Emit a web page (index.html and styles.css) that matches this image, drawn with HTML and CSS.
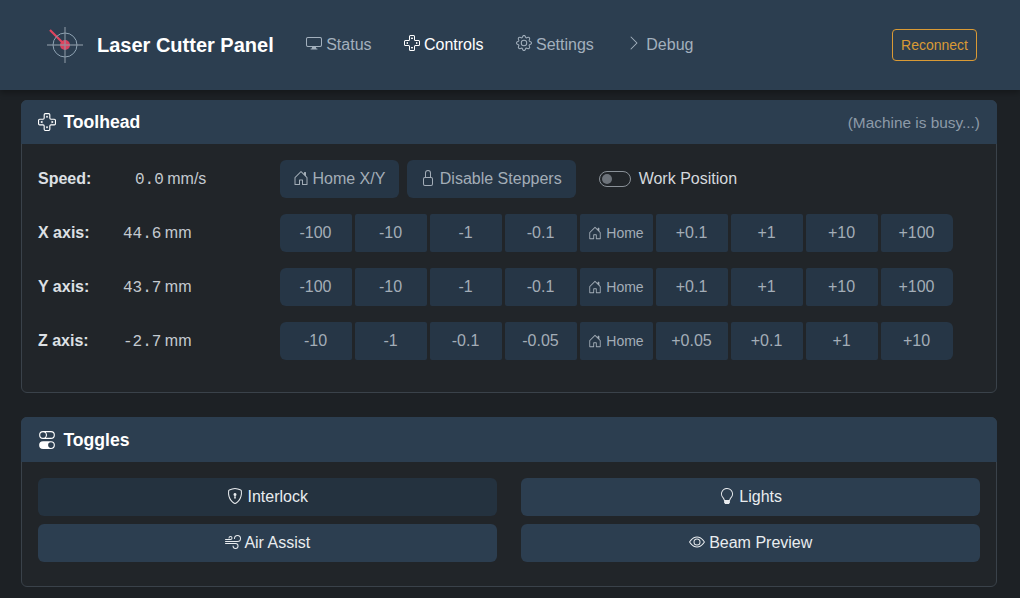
FILE: index.html
```html
<!DOCTYPE html>
<html lang="en">
<head>
  <meta charset="UTF-8">
  <title>Laser Cutter Panel</title>
  <link rel="stylesheet" href="styles.css">
</head>
<body>
  <svg class="defs" width="0" height="0">
    <symbol id="i-display" viewBox="0 0 16 16"><path d="M0 4s0-2 2-2h12s2 0 2 2v6s0 2-2 2h-4q0 1 .25 1.5H11a.5.5 0 0 1 0 1H5a.5.5 0 0 1 0-1h.75Q6 13 6 12H2s-2 0-2-2zm1.398-.855a.76.76 0 0 0-.254.302A1.5 1.5 0 0 0 1 4.01V10c0 .325.078.502.145.602q.105.156.302.254a1.5 1.5 0 0 0 .538.143L2.01 11H14c.325 0 .502-.078.602-.145a.76.76 0 0 0 .254-.302 1.5 1.5 0 0 0 .143-.538L15 9.99V4c0-.325-.078-.502-.145-.602a.76.76 0 0 0-.302-.254A1.5 1.5 0 0 0 13.99 3H2c-.325 0-.502.078-.602.145"/></symbol>
    <symbol id="i-dpad" viewBox="0 0 16 16"><path d="m7.788 2.34-.799 1.278A.25.25 0 0 0 7.201 4h1.598a.25.25 0 0 0 .212-.382l-.799-1.279a.25.25 0 0 0-.424 0Zm0 11.32-.799-1.277A.25.25 0 0 1 7.201 12h1.598a.25.25 0 0 1 .212.383l-.799 1.278a.25.25 0 0 1-.424 0ZM3.617 9.01 2.34 8.213a.25.25 0 0 1 0-.424l1.278-.799A.25.25 0 0 1 4 7.201V8.8a.25.25 0 0 1-.383.212Zm10.043-.798-1.277.799A.25.25 0 0 1 12 8.799V7.2a.25.25 0 0 1 .383-.212l1.278.799a.25.25 0 0 1 0 .424Z"/><path d="M6.5 0A1.5 1.5 0 0 0 5 1.5v3a.5.5 0 0 1-.5.5h-3A1.5 1.5 0 0 0 0 6.5v3A1.5 1.5 0 0 0 1.5 11h3a.5.5 0 0 1 .5.5v3A1.5 1.5 0 0 0 6.5 16h3a1.5 1.5 0 0 0 1.5-1.5v-3a.5.5 0 0 1 .5-.5h3A1.5 1.5 0 0 0 16 9.5v-3A1.5 1.5 0 0 0 14.5 5h-3a.5.5 0 0 1-.5-.5v-3A1.5 1.5 0 0 0 9.5 0zM6 1.5a.5.5 0 0 1 .5-.5h3a.5.5 0 0 1 .5.5v3A1.5 1.5 0 0 0 11.5 6h3a.5.5 0 0 1 .5.5v3a.5.5 0 0 1-.5.5h-3a1.5 1.5 0 0 0-1.5 1.5v3a.5.5 0 0 1-.5.5h-3a.5.5 0 0 1-.5-.5v-3A1.5 1.5 0 0 0 4.5 10h-3a.5.5 0 0 1-.5-.5v-3a.5.5 0 0 1 .5-.5h3A1.5 1.5 0 0 0 6 4.5z"/></symbol>
    <symbol id="i-gear" viewBox="0 0 16 16"><path d="M8 4.754a3.246 3.246 0 1 0 0 6.492 3.246 3.246 0 0 0 0-6.492M5.754 8a2.246 2.246 0 1 1 4.492 0 2.246 2.246 0 0 1-4.492 0"/><path d="M9.796 1.343c-.527-1.79-3.065-1.79-3.592 0l-.094.319a.873.873 0 0 1-1.255.52l-.292-.16c-1.64-.892-3.433.902-2.54 2.541l.159.292a.873.873 0 0 1-.52 1.255l-.319.094c-1.79.527-1.79 3.065 0 3.592l.319.094a.873.873 0 0 1 .52 1.255l-.16.292c-.892 1.64.901 3.434 2.541 2.54l.292-.159a.873.873 0 0 1 1.255.52l.094.319c.527 1.79 3.065 1.79 3.592 0l.094-.319a.873.873 0 0 1 1.255-.52l.292.16c1.64.893 3.434-.902 2.54-2.541l-.159-.292a.873.873 0 0 1 .52-1.255l.319-.094c1.79-.527 1.79-3.065 0-3.592l-.319-.094a.873.873 0 0 1-.52-1.255l.16-.292c.893-1.64-.902-3.433-2.541-2.54l-.292.159a.873.873 0 0 1-1.255-.52zm-2.633.283c.246-.835 1.428-.835 1.674 0l.094.319a1.873 1.873 0 0 0 2.693 1.115l.291-.16c.764-.415 1.6.42 1.184 1.185l-.159.292a1.873 1.873 0 0 0 1.116 2.692l.318.094c.835.246.835 1.428 0 1.674l-.319.094a1.873 1.873 0 0 0-1.115 2.693l.16.291c.415.764-.42 1.6-1.185 1.184l-.291-.159a1.873 1.873 0 0 0-2.693 1.116l-.094.318c-.246.835-1.428.835-1.674 0l-.094-.319a1.873 1.873 0 0 0-2.692-1.115l-.292.16c-.764.415-1.6-.42-1.184-1.185l.159-.291A1.873 1.873 0 0 0 1.945 8.93l-.319-.094c-.835-.246-.835-1.428 0-1.674l.319-.094A1.873 1.873 0 0 0 3.06 4.377l-.16-.292c-.415-.764.42-1.6 1.185-1.184l.292.159a1.873 1.873 0 0 0 2.692-1.115z"/></symbol>
    <symbol id="i-chevron" viewBox="0 0 16 16"><path d="M4.646 1.646a.5.5 0 0 1 .708 0l6 6a.5.5 0 0 1 0 .708l-6 6a.5.5 0 0 1-.708-.708L10.293 8 4.646 2.354a.5.5 0 0 1 0-.708"/></symbol>
    <symbol id="i-house" viewBox="0 0 16 16"><path d="M8.354 1.146a.5.5 0 0 0-.708 0l-6 6A.5.5 0 0 0 1.5 7.5v7a.5.5 0 0 0 .5.5h4.5a.5.5 0 0 0 .5-.5v-4h2v4a.5.5 0 0 0 .5.5H14a.5.5 0 0 0 .5-.5v-7a.5.5 0 0 0-.146-.354L13 5.793V2.5a.5.5 0 0 0-.5-.5h-1a.5.5 0 0 0-.5.5v1.293zM2.5 14V7.707l5.5-5.5 5.5 5.5V14H10v-4a.5.5 0 0 0-.5-.5h-3a.5.5 0 0 0-.5.5v4z"/></symbol>
    <symbol id="i-lock" viewBox="0 0 16 16"><path d="M8 1a2 2 0 0 1 2 2v4H6V3a2 2 0 0 1 2-2m3 6V3a3 3 0 0 0-6 0v4a2 2 0 0 0-2 2v5a2 2 0 0 0 2 2h6a2 2 0 0 0 2-2V9a2 2 0 0 0-2-2M5 8h6a1 1 0 0 1 1 1v5a1 1 0 0 1-1 1H5a1 1 0 0 1-1-1V9a1 1 0 0 1 1-1"/></symbol>
    <symbol id="i-toggles" viewBox="0 0 16 16"><path d="M4.5 9a3.5 3.5 0 1 0 0 7h7a3.5 3.5 0 1 0 0-7zm7 6a2.5 2.5 0 1 1 0-5 2.5 2.5 0 0 1 0 5m-7-14a2.5 2.5 0 1 0 0 5 2.5 2.5 0 0 0 0-5m2.45 0A3.5 3.5 0 0 1 8 3.5 3.5 3.5 0 0 1 6.95 6h4.55a2.5 2.5 0 0 0 0-5zM4.5 0h7a3.5 3.5 0 1 1 0 7h-7a3.5 3.5 0 1 1 0-7"/></symbol>
    <symbol id="i-shield" viewBox="0 0 16 16"><path d="M5.338 1.59a61 61 0 0 0-2.837.856.48.48 0 0 0-.328.39c-.554 4.157.726 7.19 2.253 9.188a10.7 10.7 0 0 0 2.287 2.233c.346.244.652.42.893.533q.18.085.293.118a1 1 0 0 0 .101.025 1 1 0 0 0 .1-.025q.114-.034.294-.118c.24-.113.547-.29.893-.533a10.7 10.7 0 0 0 2.287-2.233c1.527-1.997 2.807-5.031 2.253-9.188a.48.48 0 0 0-.328-.39c-.651-.213-1.75-.56-2.837-.855C9.552 1.29 8.531 1.067 8 1.067c-.53 0-1.552.223-2.662.524zM5.072.56C6.157.265 7.31 0 8 0s1.843.265 2.928.56c1.11.3 2.229.655 2.887.87a1.54 1.54 0 0 1 1.044 1.262c.596 4.477-.787 7.795-2.465 9.99a11.8 11.8 0 0 1-2.517 2.453 7 7 0 0 1-1.048.625c-.28.132-.581.24-.829.24s-.548-.108-.829-.24a7 7 0 0 1-1.048-.625 11.8 11.8 0 0 1-2.517-2.453C1.928 10.487.545 7.169 1.141 2.692A1.54 1.54 0 0 1 2.185 1.43 63 63 0 0 1 5.072.56"/><path d="M9.5 6.5a1.5 1.5 0 0 1-1 1.415l.385 1.99a.5.5 0 0 1-.491.595h-.788a.5.5 0 0 1-.49-.595l.384-1.99a1.5 1.5 0 1 1 2-1.415"/></symbol>
    <symbol id="i-wind" viewBox="0 0 16 16"><path d="M12.5 2A2.5 2.5 0 0 0 10 4.5a.5.5 0 0 1-1 0A3.5 3.5 0 1 1 12.5 8H.5a.5.5 0 0 1 0-1h12a2.5 2.5 0 0 0 0-5m-7 1a1 1 0 0 0-1 1 .5.5 0 0 1-1 0 2 2 0 1 1 2 2h-5a.5.5 0 0 1 0-1h5a1 1 0 0 0 0-2M0 9.5A.5.5 0 0 1 .5 9h10.042a3 3 0 1 1-3 3 .5.5 0 0 1 1 0 2 2 0 1 0 2-2H.5a.5.5 0 0 1-.5-.5"/></symbol>
    <symbol id="i-bulb" viewBox="0 0 16 16"><path d="M2 6a6 6 0 1 1 10.174 4.31c-.203.196-.359.4-.453.619l-.762 1.769A.5.5 0 0 1 10.5 13a.5.5 0 0 1 0 1 .5.5 0 0 1 0 1l-.224.447a1 1 0 0 1-.894.553H6.618a1 1 0 0 1-.894-.553L5.5 15a.5.5 0 0 1 0-1 .5.5 0 0 1 0-1 .5.5 0 0 1-.46-.302l-.761-1.77a2 2 0 0 0-.453-.618A5.98 5.98 0 0 1 2 6m6-5a5 5 0 0 0-3.479 8.592c.263.254.514.564.676.941L5.83 12h4.342l.632-1.467c.162-.377.413-.687.676-.941A5 5 0 0 0 8 1"/></symbol>
    <symbol id="i-eye" viewBox="0 0 16 16"><path d="M16 8s-3-5.5-8-5.5S0 8 0 8s3 5.5 8 5.5S16 8 16 8M1.173 8a13 13 0 0 1 1.66-2.043C4.12 4.668 5.88 3.5 8 3.5s3.879 1.168 5.168 2.457A13 13 0 0 1 14.828 8q-.086.13-.195.288c-.335.48-.83 1.12-1.465 1.755C11.879 11.332 10.119 12.5 8 12.5s-3.879-1.168-5.168-2.457A13 13 0 0 1 1.172 8z"/><path d="M8 5.5a2.5 2.5 0 1 0 0 5 2.5 2.5 0 0 0 0-5M4.5 8a3.5 3.5 0 1 1 7 0 3.5 3.5 0 0 1-7 0"/></symbol>
  </svg>

  <nav class="navbar">
    <a class="brand">
      <svg class="logo" width="36" height="36" viewBox="0 0 36 36">
        <circle cx="18" cy="18" r="5" fill="#d9415f"/>
        <path d="M3 3L18 18" stroke="#e0455f" stroke-width="2.2"/>
        <circle cx="18" cy="18" r="12" fill="none" stroke="#8fa3b3" stroke-width="1"/>
        <path d="M0 18H36M18 0V36" stroke="#8d9aa6" stroke-width="1.4" opacity=".75"/>
      </svg>
      <span>Laser Cutter Panel</span>
    </a>
    <ul class="nav-links">
      <li><a><svg class="icon"><use href="#i-display"/></svg> Status</a></li>
      <li><a class="active"><svg class="icon"><use href="#i-dpad"/></svg> Controls</a></li>
      <li><a><svg class="icon"><use href="#i-gear"/></svg> Settings</a></li>
      <li><a><svg class="icon"><use href="#i-chevron"/></svg> Debug</a></li>
    </ul>
    <button class="btn-reconnect">Reconnect</button>
  </nav>

  <main class="content">
    <section class="card">
      <header class="card-header">
        <h2><svg class="icon"><use href="#i-dpad"/></svg> Toolhead</h2>
        <span class="busy">(Machine is busy...)</span>
      </header>
      <div class="card-body toolhead">
        <div class="row">
          <div class="axis"><b>Speed:</b><span class="val speed"><code>0.0</code> mm/s</span></div>
          <div class="tools">
            <button class="btn tool"><svg class="icon"><use href="#i-house"/></svg> Home X/Y</button>
            <button class="btn tool"><svg class="icon"><use href="#i-lock"/></svg> Disable Steppers</button>
            <label class="switch"><span class="track"></span>Work Position</label>
          </div>
        </div>
        <div class="row">
          <div class="axis"><b>X axis:</b><span class="val"><code>44.6</code> mm</span></div>
          <div class="steps">
            <button class="btn">-100</button><button class="btn">-10</button><button class="btn">-1</button><button class="btn">-0.1</button>
            <button class="btn home"><svg class="icon"><use href="#i-house"/></svg> Home</button>
            <button class="btn">+0.1</button><button class="btn">+1</button><button class="btn">+10</button><button class="btn">+100</button>
          </div>
        </div>
        <div class="row">
          <div class="axis"><b>Y axis:</b><span class="val"><code>43.7</code> mm</span></div>
          <div class="steps">
            <button class="btn">-100</button><button class="btn">-10</button><button class="btn">-1</button><button class="btn">-0.1</button>
            <button class="btn home"><svg class="icon"><use href="#i-house"/></svg> Home</button>
            <button class="btn">+0.1</button><button class="btn">+1</button><button class="btn">+10</button><button class="btn">+100</button>
          </div>
        </div>
        <div class="row">
          <div class="axis"><b>Z axis:</b><span class="val"><code>-2.7</code> mm</span></div>
          <div class="steps">
            <button class="btn">-10</button><button class="btn">-1</button><button class="btn">-0.1</button><button class="btn">-0.05</button>
            <button class="btn home"><svg class="icon"><use href="#i-house"/></svg> Home</button>
            <button class="btn">+0.05</button><button class="btn">+0.1</button><button class="btn">+1</button><button class="btn">+10</button>
          </div>
        </div>
      </div>
    </section>

    <section class="card second">
      <header class="card-header">
        <h2><svg class="icon"><use href="#i-toggles"/></svg> Toggles</h2>
      </header>
      <div class="card-body toggles">
        <button class="toggle on"><svg class="icon"><use href="#i-shield"/></svg> Interlock</button>
        <button class="toggle"><svg class="icon"><use href="#i-bulb"/></svg> Lights</button>
        <button class="toggle"><svg class="icon"><use href="#i-wind"/></svg> Air Assist</button>
        <button class="toggle"><svg class="icon"><use href="#i-eye"/></svg> Beam Preview</button>
      </div>
    </section>
  </main>
</body>
</html>
```

FILE: styles.css
```css
* { box-sizing: border-box; }
html, body { height: 100%; }
body {
  margin: 0;
  overflow: hidden;
  background: #1d2125;
  color: #dee2e6;
  font-family: "Liberation Sans", Arial, sans-serif;
  font-size: 16px;
  line-height: 24px;
}
.defs { position: absolute; }
.icon { width: 16px; height: 16px; fill: currentColor; vertical-align: -2px; }

.navbar {
  display: flex;
  align-items: center;
  height: 90px;
  padding: 0 43px 0 47px;
  background: #2c3e50;
  box-shadow: 0 3px 6px rgba(0, 0, 0, .3);
}
.brand { display: flex; align-items: center; gap: 14px; margin-right: 16px; color: #fff; font-size: 20px; font-weight: 700; }
.nav-links { display: flex; flex: 1; margin: 0; padding: 0; list-style: none; }
.nav-links a { display: block; padding: 8px 16px; color: #a3b0bd; }
.nav-links a.active { color: #fff; }
.nav-links .icon { vertical-align: -1px; }
.btn-reconnect {
  height: 32px;
  padding: 0 8px;
  border: 1px solid #d99a35;
  border-radius: 4px;
  background: transparent;
  color: #d99a35;
  font: 14px/20px "Liberation Sans", Arial, sans-serif;
}

.content { padding: 10px 23px 0 21px; }
.card { margin-bottom: 24px; border: 1px solid #3a424a; border-radius: 6px; background: #212529; }
.card-header {
  display: flex;
  align-items: center;
  justify-content: space-between;
  height: 44px;
  margin: -1px -1px 0;
  padding: 0 17px;
  border-radius: 6px 6px 0 0;
  background: #2c3e50;
}
.second .card-header { height: 45px; }
.card-header h2 { margin: 0; color: #fff; font-size: 17.6px; font-weight: 700; }
.card-header .icon { width: 18px; height: 18px; vertical-align: -3px; margin-right: 2.5px; }
.busy { padding-top: 1px; color: #8c9aa8; font-size: 15.4px; }

.card-body { padding: 16px 16px 32px; }
.row { display: flex; align-items: center; height: 38px; margin-bottom: 16px; }
.row:last-child { margin-bottom: 0; }
.axis { display: flex; width: 242px; }
.axis b { width: 60px; color: #dde0e4; }
.val { width: 182px; padding-left: 25px; color: #c4cad0; white-space: nowrap; word-spacing: -1px; }
.val.speed { padding-left: 37px; }
.val code { font: 16px "Liberation Mono", monospace; }

.btn {
  height: 38px;
  padding: 0 1px 0 0;
  border: 0;
  border-radius: 2px;
  background: #263646;
  color: #a3adb7;
  font: 16px/24px "Liberation Sans", Arial, sans-serif;
}
.tools { display: flex; align-items: center; gap: 8px; }
.tool { padding: 0 14px 0 13px; border-radius: 6px; }
.tool .icon { margin-right: -1px; }
.switch { display: flex; align-items: center; gap: 8px; margin-left: 15px; color: #d5d9dd; }
.track {
  position: relative;
  width: 32px;
  height: 16px;
  border: 1px solid #8a9198;
  border-radius: 8px;
}
.track::after {
  content: "";
  position: absolute;
  top: 2px;
  left: 2px;
  width: 10px;
  height: 10px;
  border-radius: 50%;
  background: #6d737a;
}
.steps { display: flex; gap: 3px; }
.steps .btn { width: 72px; }
.steps .btn:first-child { border-radius: 6px 2px 2px 6px; }
.steps .btn:last-child { border-radius: 2px 6px 6px 2px; }
.steps .home { width: 73px; font-size: 14px; }
.steps .home .icon { width: 14px; height: 14px; }

.toggles { display: grid; grid-template-columns: 1fr 1fr; column-gap: 24px; row-gap: 8px; padding: 16px 16px 24px; }
.toggle {
  height: 38px;
  border: 0;
  border-radius: 6px;
  background: #2c3e50;
  color: #e9ecef;
  font: 16px/24px "Liberation Sans", Arial, sans-serif;
}
.toggle.on { background: #24323f; }
```
